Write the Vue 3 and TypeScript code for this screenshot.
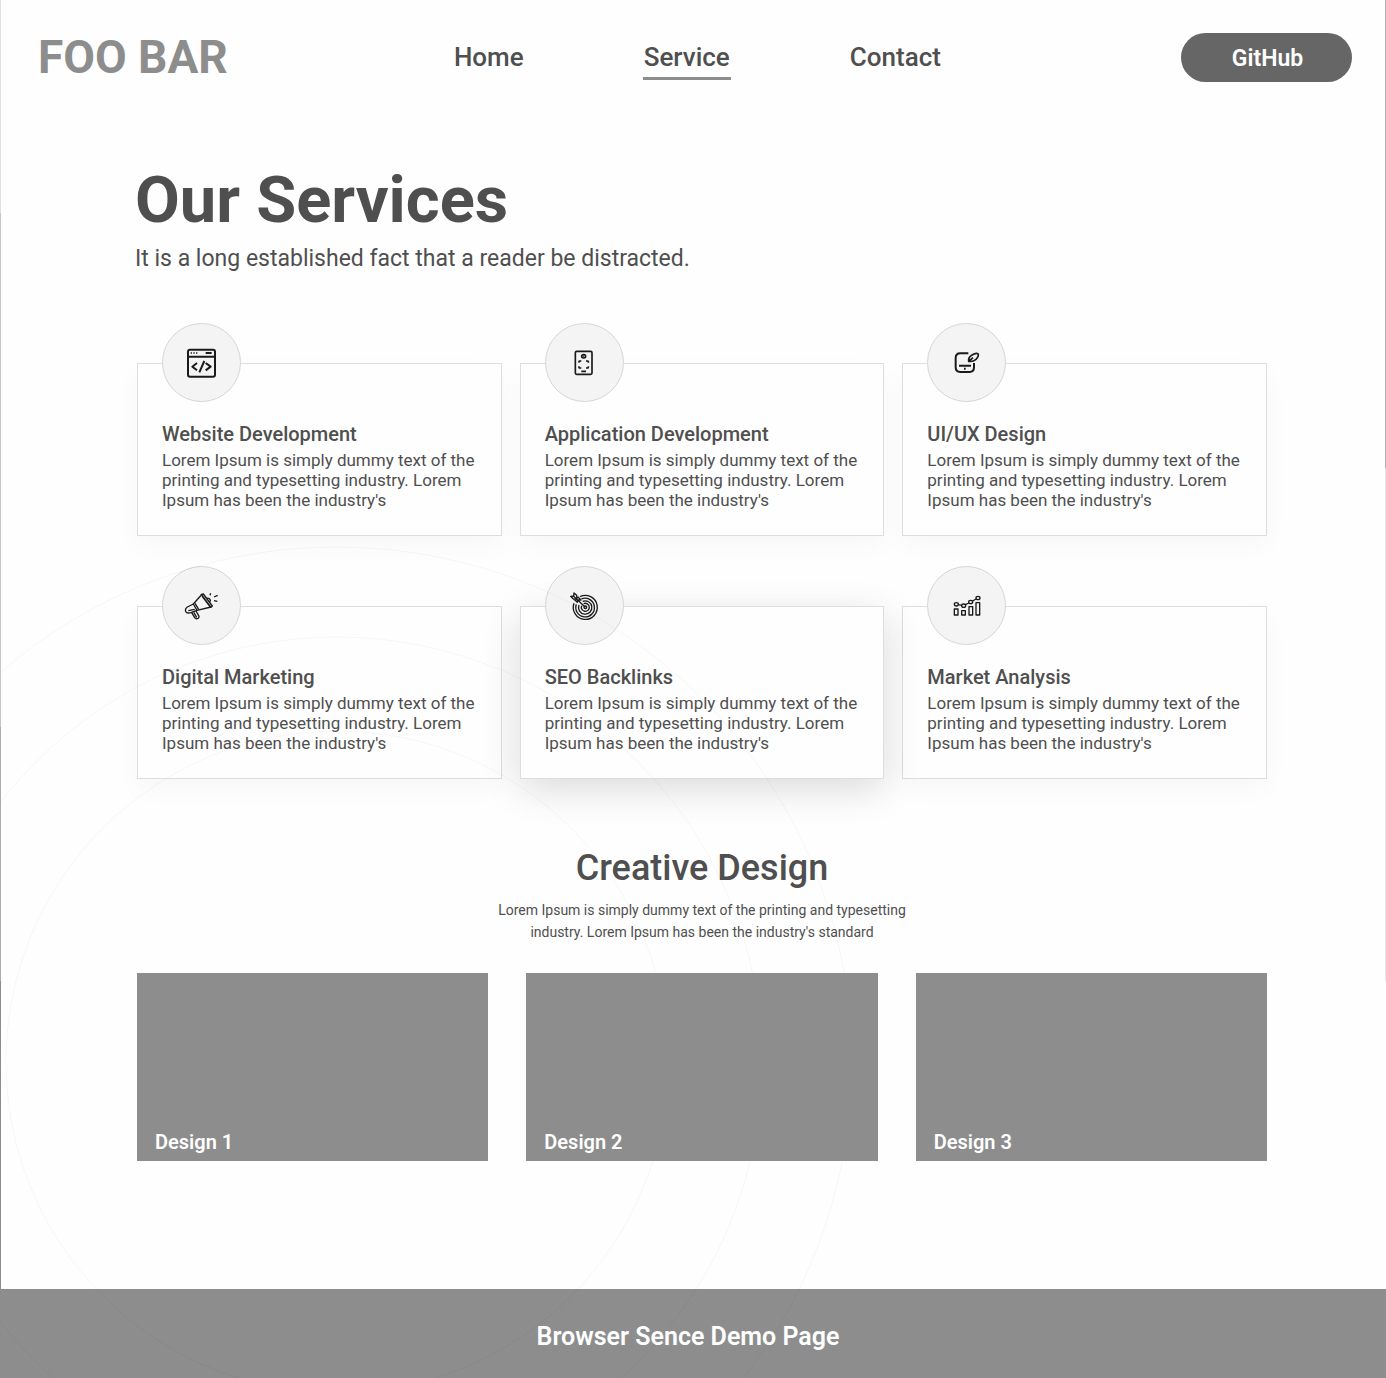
<script setup lang="ts">
import { ref } from 'vue'

interface Service {
  title: string
  icon: string
  raised?: boolean
}

const links = ['Home', 'Service', 'Contact']
const active = ref('Service')

const blurb =
  "Lorem Ipsum is simply dummy text of the printing and typesetting industry. Lorem Ipsum has been the industry's"

const services: Service[] = [
  { title: 'Website Development', icon: 'code' },
  { title: 'Application Development', icon: 'app' },
  { title: 'UI/UX Design', icon: 'design' },
  { title: 'Digital Marketing', icon: 'megaphone' },
  { title: 'SEO Backlinks', icon: 'target', raised: true },
  { title: 'Market Analysis', icon: 'chart' },
]

const designs = ['Design 1', 'Design 2', 'Design 3']
</script>

<template>
  <div class="page">
    <header class="header">
      <a class="logo" href="#">FOO BAR</a>
      <nav class="nav">
        <a
          v-for="link in links"
          :key="link"
          href="#"
          :class="{ active: link === active }"
          @click.prevent="active = link"
          >{{ link }}</a
        >
      </nav>
      <button class="github" type="button">GitHub</button>
    </header>

    <main class="main">
      <div class="intro">
        <h1>Our Services</h1>
        <p class="lead">It is a long established fact that a reader be distracted.</p>
      </div>

      <section class="services">
        <article v-for="s in services" :key="s.title" class="card" :class="{ raised: s.raised }">
          <span class="badge">
            <svg viewBox="0 0 108 108" aria-hidden="true">
              <g v-if="s.icon === 'code'" stroke-width="6">
                <rect x="12" y="14" width="81" height="81" rx="6" />
                <path d="M12 35H93M65 24H83M39 54L25 65L39 76M65 54L80 65L65 76M61 48L46 82" />
                <path d="M20 24H24M28 24H32M36 24H40" stroke-width="5" />
              </g>
              <g v-else-if="s.icon === 'app'" stroke-width="5">
                <rect x="28" y="19" width="50" height="69" rx="4" />
                <ellipse cx="53" cy="34" rx="6" ry="5" />
                <path d="M38 53L40 48H46M60 48H66L68 53M38 64L40 69H46M60 69H66L68 64M46 79H60" />
                <path d="M52 34H54" />
              </g>
              <g v-else-if="s.icon === 'design'" stroke-width="6">
                <path d="M58 25H34Q20 25 20 39V67Q20 81 34 81H62Q75 81 75 67V54" />
                <path d="M30 62H66M45 71H50" />
                <path d="M59 49Q57 37 69 30Q80 23 87 26Q91 33 81 43Q72 51 59 49ZM59 49L72 38" stroke-width="5" />
              </g>
              <g v-else-if="s.icon === 'megaphone'" stroke-width="4">
                <path d="M52 19L58 18L85 54L81 58ZM54 24L79 57" />
                <path d="M52 21L28 48L39 67L81 57" />
                <path d="M28 48L10 57Q1 64 6 72Q11 77 21 74L39 67M33 46L44 64M13 68L32 64" />
                <path d="M23 74L32 89Q36 94 42 91Q47 88 44 83L36 69M29 73L38 88" />
                <path d="M68 31Q75 29 78 34Q81 39 76 42M78 22L80 16M90 27L101 22M90 38L100 40" />
              </g>
              <g v-else-if="s.icon === 'target'" stroke-width="4">
                <path d="M42 26A36 36 0 1 1 24 46" />
                <path d="M46 33A28 28 0 1 1 31 49" />
                <path d="M50 40A20 20 0 1 1 39 51" />
                <path d="M53 47A12 12 0 1 1 47 53" />
                <circle cx="58" cy="58" r="4" />
                <path d="M58 58L22 24M33 34L32 22L24 15L23 24L14 25L22 33ZM34 35L45 36L35 26M34 35L34 43L24 34" />
              </g>
              <g v-else stroke-width="4">
                <path d="M16 63H27V81H16ZM38 68H49V81H38ZM60 56H71V81H60ZM81 44H92V81H81Z" />
                <ellipse cx="22" cy="49" rx="6" ry="5" />
                <ellipse cx="44" cy="53" rx="6" ry="5" />
                <ellipse cx="65" cy="42" rx="6" ry="5" />
                <ellipse cx="87" cy="30" rx="6" ry="5" />
                <path d="M28 50L38 52M49 50L60 45M71 39L81 33" />
              </g>
            </svg>
          </span>
          <h2>{{ s.title }}</h2>
          <p>{{ blurb }}</p>
        </article>
      </section>

      <section class="creative">
        <h2>Creative Design</h2>
        <p>
          Lorem Ipsum is simply dummy text of the printing and typesetting industry. Lorem Ipsum has
          been the industry's standard
        </p>
        <div class="tiles">
          <a v-for="d in designs" :key="d" class="tile" href="#">{{ d }}</a>
        </div>
      </section>
    </main>

    <footer class="footer">Browser Sence Demo Page</footer>

    <!-- Faint concentric rings behind the lower half of the page -->
    <svg class="rings" viewBox="0 0 860 832" aria-hidden="true">
      <circle cx="337" cy="516" r="331" />
      <circle cx="337" cy="516" r="425" />
      <circle cx="337" cy="516" r="515" />
    </svg>
  </div>
</template>

<style>
body {
  margin: 0;
  background: #fefefe;
}
</style>

<style scoped>
* {
  box-sizing: border-box;
}

.page {
  position: relative;
  overflow: hidden;
  font-family: Roboto, 'Liberation Sans', sans-serif;
  color: #4f4f4f;
  background: #fefefe;
}

.page::before,
.page::after {
  content: '';
  position: absolute;
  top: 0;
  left: 0;
  z-index: 3;
  width: 1px;
  height: 100%;
  background: linear-gradient(#e0e0e0 213px, #c6c6c6 213px 727px, #acacac 727px 981px, #8c8c8c 981px);
}

.page::after {
  left: auto;
  right: 0;
  height: 981px;
  background: linear-gradient(#b0b0b0 468px, #e4e4e4 468px);
}

a {
  color: inherit;
  text-decoration: none;
}

h1,
h2,
p {
  margin: 0;
}

.header {
  display: flex;
  align-items: center;
  justify-content: space-between;
  padding: 33px 34px 0 38px;
}

.logo {
  font-size: 46px;
  line-height: 49px;
  font-weight: 700;
  color: #8d8d8d;
}

.nav {
  display: flex;
  gap: 118px;
  padding-right: 14px;
  font-size: 26px;
  line-height: 40px;
  font-weight: 500;
}

.nav a {
  padding: 2px 1px 0;
  border-bottom: 3px solid transparent;
}

.nav .active {
  border-color: #8d8d8d;
}

.github {
  width: 171px;
  height: 49px;
  padding: 2px 0 0 2px;
  border: 0;
  border-radius: 25px;
  background: #666;
  color: #fff;
  font: 600 23px Roboto, 'Liberation Sans', sans-serif;
}

.main {
  padding: 80px 119px 128px 137px;
}

.intro {
  margin-left: -2px;
}

h1 {
  font-size: 65px;
  line-height: 76px;
  font-weight: 700;
}

.lead {
  margin-top: 6px;
  font-size: 23px;
  line-height: 30px;
}

.services {
  display: grid;
  grid-template-columns: repeat(3, 1fr);
  gap: 70px 18px;
  margin-top: 89px;
}

.card {
  position: relative;
  padding: 58px 16px 25px 24px;
  border: 1px solid #dedede;
  background: #fefefe;
  box-shadow: 0 10px 24px rgba(0, 0, 0, 0.03);
}

.raised {
  z-index: 1;
  box-shadow: 0 10px 36px rgba(0, 0, 0, 0.14);
}

.badge {
  position: absolute;
  top: -41px;
  left: 24px;
  display: grid;
  place-items: center;
  width: 79px;
  height: 79px;
  border: 1px solid #d6d6d6;
  border-radius: 50%;
  background: #f4f4f4;
}

.badge svg {
  width: 36px;
  height: 36px;
  fill: none;
  stroke: #1a1a1a;
  stroke-linejoin: round;
}

.card h2 {
  font-size: 20px;
  line-height: 24px;
  font-weight: 500;
}

.card p {
  margin-top: 4px;
  font-size: 17px;
  line-height: 20px;
}

.creative {
  margin-top: 67px;
  text-align: center;
}

.creative h2 {
  font-size: 36px;
  line-height: 44px;
  font-weight: 500;
}

.creative p {
  max-width: 440px;
  margin: 9px auto 0;
  font-size: 14px;
  line-height: 22px;
}

.tiles {
  position: relative;
  z-index: 3;
  display: grid;
  grid-template-columns: repeat(3, 1fr);
  gap: 38px;
  margin-top: 30px;
}

.tile {
  display: flex;
  align-items: flex-end;
  height: 188px;
  padding: 0 18px 7px;
  background: #8d8d8d;
  color: #fff;
  font-size: 20px;
  line-height: 24px;
  font-weight: 600;
}

.footer {
  padding: 33px 10px 26px 0;
  background: #8d8d8d;
  color: #fff;
  font-size: 25px;
  line-height: 30px;
  font-weight: 600;
  text-align: center;
}

.rings {
  position: absolute;
  left: 0;
  bottom: 0;
  z-index: 2;
  width: 860px;
  height: 832px;
  fill: none;
  stroke: rgba(0, 0, 0, 0.035);
  pointer-events: none;
}
</style>
